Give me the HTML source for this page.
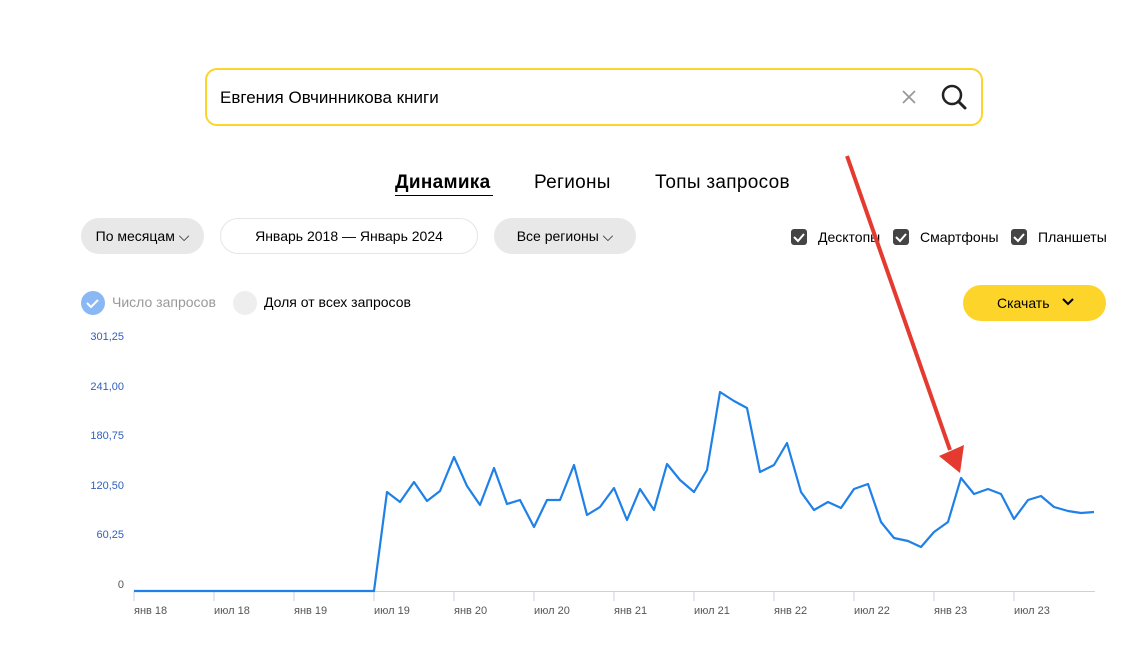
<!DOCTYPE html><html><head><meta charset="utf-8"><style>
body{margin:0;width:1146px;height:650px;background:#fff;font-family:"Liberation Sans",sans-serif;position:relative;overflow:hidden;color:#000}
.a{position:absolute}
.pill{position:absolute;height:36px;border-radius:18px;background:#e8e8e8;font-size:14px;line-height:36px;text-align:center}
.cb{position:absolute;width:16px;height:16px;background:#444;border-radius:3px;top:229px}
.cl{position:absolute;top:229px;font-size:14px}
.yl{position:absolute;font-size:11px;color:#3060c0;right:1022px}
.xl{position:absolute;top:605px;font-size:11px;color:#555}
</style></head><body>
<div class="a" style="left:205px;top:68px;width:774px;height:54px;border:2px solid #fcd42a;border-radius:12px"></div>
<div class="a" style="left:220px;top:88px;font-size:17px">Евгения Овчинникова книги</div>
<svg class="a" style="left:900px;top:88px" width="18" height="18"><path d="M3 3L15 15M15 3L3 15" stroke="#999" stroke-width="1.8"/></svg>
<svg class="a" style="left:940px;top:83px" width="28" height="28"><circle cx="12" cy="12" r="9" fill="none" stroke="#222" stroke-width="2.5"/><path d="M18.5 18.5L25 25" stroke="#222" stroke-width="3" stroke-linecap="round"/></svg>
<div class="a" style="left:395px;top:172px;font-size:19px;font-weight:bold;letter-spacing:0.3px">Динамика</div>
<div class="a" style="left:395px;top:195px;width:98px;height:1px;background:#000"></div>
<div class="a" style="left:534px;top:172px;font-size:19px;letter-spacing:0.3px">Регионы</div>
<div class="a" style="left:655px;top:172px;font-size:19px;letter-spacing:0.3px">Топы запросов</div>
<div class="pill" style="left:81px;top:218px;width:123px">По месяцам ⌵</div>
<div class="pill" style="left:220px;top:218px;width:256px;background:#fff;border:1px solid #e5e5e5;height:34px;line-height:34px">Январь 2018 — Январь 2024</div>
<div class="pill" style="left:494px;top:218px;width:142px">Все регионы ⌵</div>
<div class="cb" style="left:791px"></div><div class="cl" style="left:818px">Десктопы</div>
<div class="cb" style="left:893px"></div><div class="cl" style="left:920px">Смартфоны</div>
<div class="cb" style="left:1011px"></div><div class="cl" style="left:1038px">Планшеты</div>
<svg class="a" style="left:0;top:0" width="1146" height="650">
<g stroke="#fff" stroke-width="2" fill="none"><path d="M794 237l4 4 6-7M896 237l4 4 6-7M1014 237l4 4 6-7"/></g>
<circle cx="93" cy="303" r="12" fill="#8ab8f5"/><path d="M87 303l4 4 7-7" stroke="#fff" stroke-width="2" fill="none"/>
<circle cx="245" cy="303" r="12" fill="#eee"/>
<path d="M134 591.5H1095" stroke="#c8d2e6"/>
<g stroke="#c8d2e6"><path d="M134 591v10M214 591v10M294 591v10M374 591v10M454 591v10M534 591v10M614 591v10M694 591v10M774 591v10M854 591v10M934 591v10M1014 591v10"/></g>
<polyline fill="none" stroke="#1f80e8" stroke-width="2.2" stroke-linejoin="round" points="134,591 374,591 387,492 400,502 414,482 427,501 440,491 454,457 467,486 480,505 494,468 507,504 520,500 534,527 547,500 560,500 574,465 587,515 600,507 614,488 627,520 640,489 654,510 667,464 680,480 694,492 707,470 720,392 734,401 747,408 760,472 774,465 787,443 801,492 814,510 828,502 841,508 854,489 868,484 881,522 894,538 908,541 921,547 934,532 948,522 961,478 974,494 988,489 1001,494 1014,519 1028,500 1041,496 1054,507 1068,511 1081,513 1094,512"/>
<path d="M847 156L950 450" stroke="#e53a2f" stroke-width="4"/>
<path d="M939 456L964 445L960 473Z" fill="#e53a2f"/>
<path d="M1063 299l5 5 5-5" stroke="#000" stroke-width="2" fill="none"/>
</svg>
<div class="a" style="left:112px;top:294px;font-size:14px;color:#999">Число запросов</div>
<div class="a" style="left:264px;top:294px;font-size:14px">Доля от всех запросов</div>
<div class="a" style="left:963px;top:285px;width:143px;height:36px;border-radius:18px;background:#fcd42a;font-size:14px;line-height:36px;z-index:-1"><span style="margin-left:34px">Скачать</span></div>
<div class="yl" style="top:331px">301,25</div>
<div class="yl" style="top:381px">241,00</div>
<div class="yl" style="top:430px">180,75</div>
<div class="yl" style="top:480px">120,50</div>
<div class="yl" style="top:529px">60,25</div>
<div class="yl" style="top:579px;color:#555">0</div>
<div class="xl" style="left:134px">янв 18</div><div class="xl" style="left:214px">июл 18</div><div class="xl" style="left:294px">янв 19</div><div class="xl" style="left:374px">июл 19</div><div class="xl" style="left:454px">янв 20</div><div class="xl" style="left:534px">июл 20</div><div class="xl" style="left:614px">янв 21</div><div class="xl" style="left:694px">июл 21</div><div class="xl" style="left:774px">янв 22</div><div class="xl" style="left:854px">июл 22</div><div class="xl" style="left:934px">янв 23</div><div class="xl" style="left:1014px">июл 23</div>
</body></html>
